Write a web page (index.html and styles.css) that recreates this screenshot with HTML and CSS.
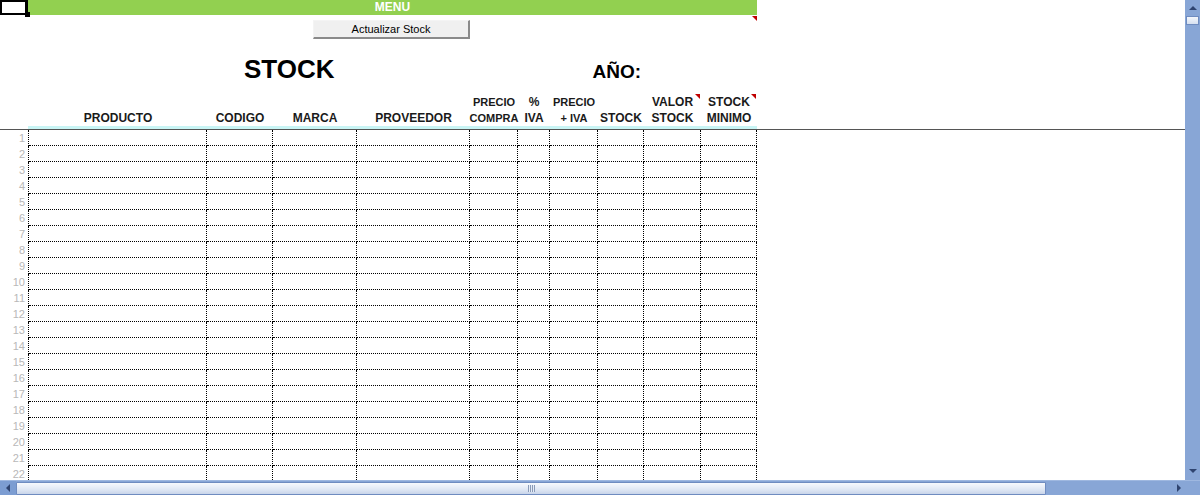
FILE: index.html
```html
<!DOCTYPE html>
<html lang="es">
<head>
<meta charset="utf-8">
<title>STOCK</title>
<link rel="stylesheet" href="styles.css">
</head>
<body>
<div class="app">
  <div class="main">
    <div class="sheet">
      <div class="top-row">
        <div class="corner"><span class="handle"></span></div>
        <div class="menu">MENU</div>
      </div>
      <div class="btn-row">
        <button class="btn">Actualizar Stock</button>
        <span class="note note-btn"></span>
      </div>
      <div class="title-row">
        <span class="title">STOCK</span>
        <span class="year">AÑO:</span>
      </div>
      <div class="head grid">
        <div class="hc"></div>
        <div class="hc">PRODUCTO</div>
        <div class="hc">CODIGO</div>
        <div class="hc">MARCA</div>
        <div class="hc">PROVEEDOR</div>
        <div class="hc sm">PRECIO<br>COMPRA</div>
        <div class="hc">%<br>IVA</div>
        <div class="hc sm">PRECIO<br>+ IVA</div>
        <div class="hc">STOCK</div>
        <div class="hc">VALOR<br>STOCK<span class="note"></span></div>
        <div class="hc">STOCK<br>MINIMO<span class="note"></span></div>
      </div>
      <div class="cyan-row"><div class="cyan"></div></div>
      <div class="rule"></div>
      <div class="rows" id="rows"></div>
    </div>
    <div class="vscroll">
      <span class="arr-up"></span>
      <span class="vthumb"></span>
      <span class="vfill"></span>
      <span class="arr-down"></span>
    </div>
  </div>
  <div class="hscroll">
    <span class="hbtn"><span class="arr-left"></span></span>
    <span class="hthumb"><span class="grip"></span></span>
    <span class="hfill"></span>
    <span class="arr-right"></span>
    <span class="hcorner"></span>
  </div>
</div>
<script src="script.js"></script>
</body>
</html>
```
FILE: script.js
```js
var rows = document.getElementById('rows');
var html = '';
for (var i = 1; i <= 22; i++) {
  html += '<div class="grid row"><div class="rn">' + i + '</div>';
  for (var c = 0; c < 10; c++) html += '<div class="dc"></div>';
  html += '</div>';
}
rows.innerHTML = html;
```
FILE: styles.css
```css
* { box-sizing: border-box; }
html, body { margin: 0; padding: 0; }
body {
  width: 1200px;
  height: 495px;
  overflow: hidden;
  background: #fff;
  font-family: "Liberation Sans", Arial, sans-serif;
  color: #1a1a1a;
}
.app { display: flex; flex-direction: column; width: 1200px; height: 495px; }
.main { display: flex; height: 480px; }
.sheet { width: 1185px; height: 480px; overflow: hidden; }

.top-row { display: flex; height: 15px; }
.corner {
  position: relative;
  width: 28px;
  height: 15px;
  border: 2px solid #000;
  border-right-width: 3px;
}
.handle {
  position: absolute;
  right: -5px;
  bottom: -4px;
  width: 5px;
  height: 5px;
  background: #000;
}
.menu {
  width: 729px;
  height: 15px;
  background: #92d050;
  color: #fff;
  font-weight: bold;
  font-size: 12px;
  line-height: 15px;
  text-align: center;
}

.btn-row { position: relative; height: 30px; padding: 5px 0 0 313px; width: 757px; }
.btn {
  display: block;
  width: 157px;
  height: 19px;
  padding: 0;
  margin: 0;
  background: #f0f0f0;
  border: 1px solid #f4f4f4;
  border-right: 2px solid #8a8a8a;
  border-bottom: 2px solid #8a8a8a;
  font-family: "Liberation Sans", Arial, sans-serif;
  font-size: 11px;
  color: #000;
  line-height: 15px;
}
.note {
  position: absolute;
  top: 1px;
  right: 0;
  width: 0;
  height: 0;
  border-top: 5px solid #c00000;
  border-left: 5px solid transparent;
}
.note-btn { top: 1px; right: 0; }

.title-row { display: flex; align-items: baseline; height: 45px; padding-top: 7px; }
.title { margin-left: 244px; font-size: 26px; font-weight: bold; color: #000; line-height: 34px; }
.year { margin-left: 258px; font-size: 19px; font-weight: bold; color: #000; }

.grid {
  display: grid;
  grid-template-columns: 29px 178px 66px 84px 113px 48px 32px 48px 46px 57px 56px;
  width: 757px;
}
.head { height: 36px; }
.hc {
  position: relative;
  display: flex;
  flex-direction: column;
  justify-content: flex-end;
  align-items: center;
  text-align: center;
  font-weight: bold;
  font-size: 12px;
  line-height: 16px;
  white-space: nowrap;
}
.hc.sm { font-size: 11px; }
.hc .note { top: 4px; right: 1px; }

.cyan-row { height: 3px; padding-left: 28px; }
.cyan { width: 729px; height: 3px; background: #c9f5f5; }
.rule { height: 1px; background: #555; width: 1185px; }

.row { height: 16px; }
.rn {
  border-right: 1px dotted #000;
  color: #b8b8b8;
  font-size: 11px;
  line-height: 16px;
  text-align: right;
  padding-right: 3px;
}
.dc {
  border-right: 1px dotted #000;
  border-bottom: 1px dotted #000;
}

.vscroll {
  position: relative;
  width: 15px;
  height: 480px;
  background: #88a6d6;
  display: flex;
  flex-direction: column;
  align-items: center;
}
.arr-up {
  margin-top: 6px;
  width: 0; height: 0;
  border-left: 4px solid transparent;
  border-right: 4px solid transparent;
  border-bottom: 4px solid #2f4470;
}
.vthumb {
  margin-top: 6px;
  width: 13px;
  height: 9px;
  border: 1px solid #6f8cc0;
  background: linear-gradient(#f4f7fc, #d6e0f0);
}
.vfill { flex: 1; }
.arr-down {
  margin-bottom: 7px;
  width: 0; height: 0;
  border-left: 4px solid transparent;
  border-right: 4px solid transparent;
  border-top: 4px solid #2f4470;
}

.hscroll {
  display: flex;
  align-items: center;
  height: 15px;
  background: #88a6d6;
  border-top: 1px solid #9fb8e0;
}
.hbtn {
  width: 16px;
  height: 14px;
  background: #7c9dd2;
  display: flex;
  align-items: center;
  justify-content: center;
}
.arr-left {
  width: 0; height: 0;
  border-top: 4px solid transparent;
  border-bottom: 4px solid transparent;
  border-right: 4px solid #2f4470;
}
.hthumb {
  width: 1030px;
  height: 13px;
  border: 1px solid #6f8cc0;
  border-radius: 1px;
  background: linear-gradient(#f7f9fd, #dfe7f4 60%, #c9d5ea);
  display: flex;
  align-items: center;
  justify-content: center;
}
.grip {
  width: 7px;
  height: 7px;
  background: repeating-linear-gradient(90deg, #8a9bb8 0 1px, #e6ecf6 1px 2px);
}
.hfill { flex: 1; }
.arr-right {
  margin-right: 4px;
  width: 0; height: 0;
  border-top: 4px solid transparent;
  border-bottom: 4px solid transparent;
  border-left: 4px solid #2f4470;
}
.hcorner { width: 15px; height: 14px; background: #88a6d6; }
```
